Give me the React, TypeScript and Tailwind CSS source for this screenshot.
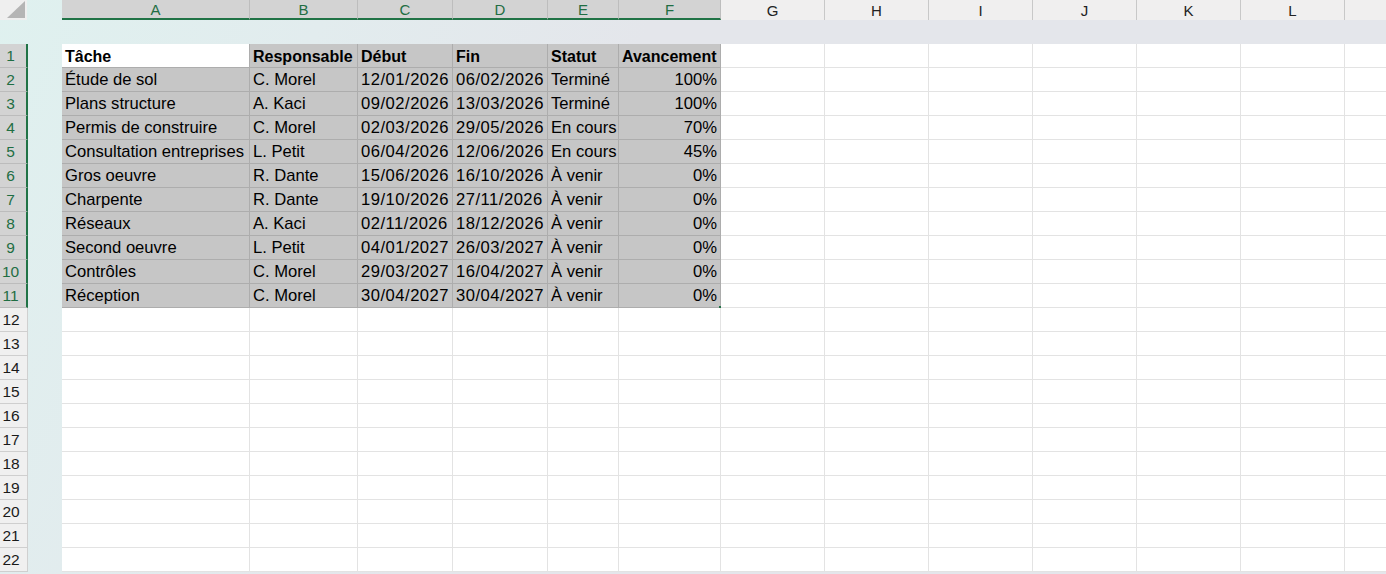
import React from "react";

const cols = [
  { l: "A", w: 188 },
  { l: "B", w: 107 },
  { l: "C", w: 95 },
  { l: "D", w: 95 },
  { l: "E", w: 71 },
  { l: "F", w: 102 },
  { l: "G", w: 104 },
  { l: "H", w: 104 },
  { l: "I", w: 104 },
  { l: "J", w: 104 },
  { l: "K", w: 104 },
  { l: "L", w: 104 },
  { l: "", w: 104 },
];

const data: string[][] = [
  ["Tâche", "Responsable", "Début", "Fin", "Statut", "Avancement"],
  ["Étude de sol", "C. Morel", "12/01/2026", "06/02/2026", "Terminé", "100%"],
  ["Plans structure", "A. Kaci", "09/02/2026", "13/03/2026", "Terminé", "100%"],
  ["Permis de construire", "C. Morel", "02/03/2026", "29/05/2026", "En cours", "70%"],
  ["Consultation entreprises", "L. Petit", "06/04/2026", "12/06/2026", "En cours", "45%"],
  ["Gros oeuvre", "R. Dante", "15/06/2026", "16/10/2026", "À venir", "0%"],
  ["Charpente", "R. Dante", "19/10/2026", "27/11/2026", "À venir", "0%"],
  ["Réseaux", "A. Kaci", "02/11/2026", "18/12/2026", "À venir", "0%"],
  ["Second oeuvre", "L. Petit", "04/01/2027", "26/03/2027", "À venir", "0%"],
  ["Contrôles", "C. Morel", "29/03/2027", "16/04/2027", "À venir", "0%"],
  ["Réception", "C. Morel", "30/04/2027", "30/04/2027", "À venir", "0%"],
];

const font = { fontFamily: '"Liberation Sans", Arial, sans-serif' };

export default function App() {
  const rows = Array.from({ length: 22 }, (_, i) => i + 1);
  return (
    <div
      className="w-[1386px] h-[574px] overflow-hidden bg-[linear-gradient(115deg,#dff1ef_0%,#e2ecee_20%,#e4e6eb_40%)] text-black"
      style={font}
    >
      {/* column header row */}
      <div className="flex h-[20px]">
        <div className="w-[27px] h-[20px] bg-[#efefef] relative shrink-0">
          <svg width="27" height="20" className="absolute left-0 top-0">
            <polygon points="7,18 25,18 25,1" fill="#b5b5b5" />
          </svg>
        </div>
        <div className="w-[35px] shrink-0" />
        {cols.map((c, i) => {
          const sel = i < 6;
          return (
            <div
              key={i}
              style={{ width: i === 1 ? 108 : c.w }}
              className={
                "shrink-0 h-[20px] flex items-center justify-center text-[15px] leading-none border-r " +
                (sel
                  ? "bg-[#d3d3d3] text-[#1f6e43] border-r-[#bdbdbd] border-b-2 border-b-[#217346]"
                  : "bg-[#f0efef] text-[#222] border-r-[#c8c8c8]")
              }
            >
              {c.l}
            </div>
          );
        })}
      </div>
      {/* band */}
      <div className="h-[24px]" />
      {rows.map((r) => {
        const sel = r <= 11;
        const rowData = data[r - 1];
        return (
          <div key={r} className="flex h-[24px]">
            <div
              className={
                "w-[28px] shrink-0 h-[24px] flex items-center justify-center pr-[5px] pt-[1px] text-[15.5px] border-b " +
                (sel
                  ? "bg-[#d3d3d3] text-[#1f6e43] border-b-[#bcbcbc] border-r-2 border-r-[#217346]"
                  : "bg-[#f0f0f0] text-[#1a1a1a] border-b-[#cfcfcf] border-r border-r-[#d0d0d0]")
              }
            >
              {r}
            </div>
            <div className="w-[34px] shrink-0" />
            {cols.map((c, ci) => {
              const inSel = sel && ci < 6;
              const active = r === 1 && ci === 0;
              const val = rowData && ci < 6 ? rowData[ci] : "";
              const right = ci === 5 && r > 1;
              const isDate = r > 1 && (ci === 2 || ci === 3);
              let cls =
                "shrink-0 h-[24px] flex items-center px-[3px] pt-[2px] whitespace-nowrap overflow-visible border-r border-b ";
              if (inSel) {
                cls += active ? "bg-white " : "bg-[#c6c6c6] ";
                cls += "border-r-[#adadad] border-b-[#adadad] ";
                if (ci === 5) cls += "border-r-[#8fc3a6] ";
                if (r === 11) cls += "border-b-[#8fc3a6] ";
              } else {
                cls += "bg-white border-r-[#e3e3e3] border-b-[#e3e3e3] ";
              }
              if (r === 1) cls += "font-bold text-[16px] ";
              else cls += "text-[16.6px] ";
              if (isDate) cls += "tracking-[0.5px] ";
              if (right) cls += "justify-end ";
              return (
                <div key={ci} style={{ width: ci === 1 ? 108 : c.w }} className={cls + "relative"}>
                  {val}
                  {r === 11 && ci === 5 && (
                    <div className="absolute right-[-2px] bottom-[-2px] w-[3px] h-[3px] bg-[#217346]" />
                  )}
                </div>
              );
            })}
          </div>
        );
      })}
    </div>
  );
}
